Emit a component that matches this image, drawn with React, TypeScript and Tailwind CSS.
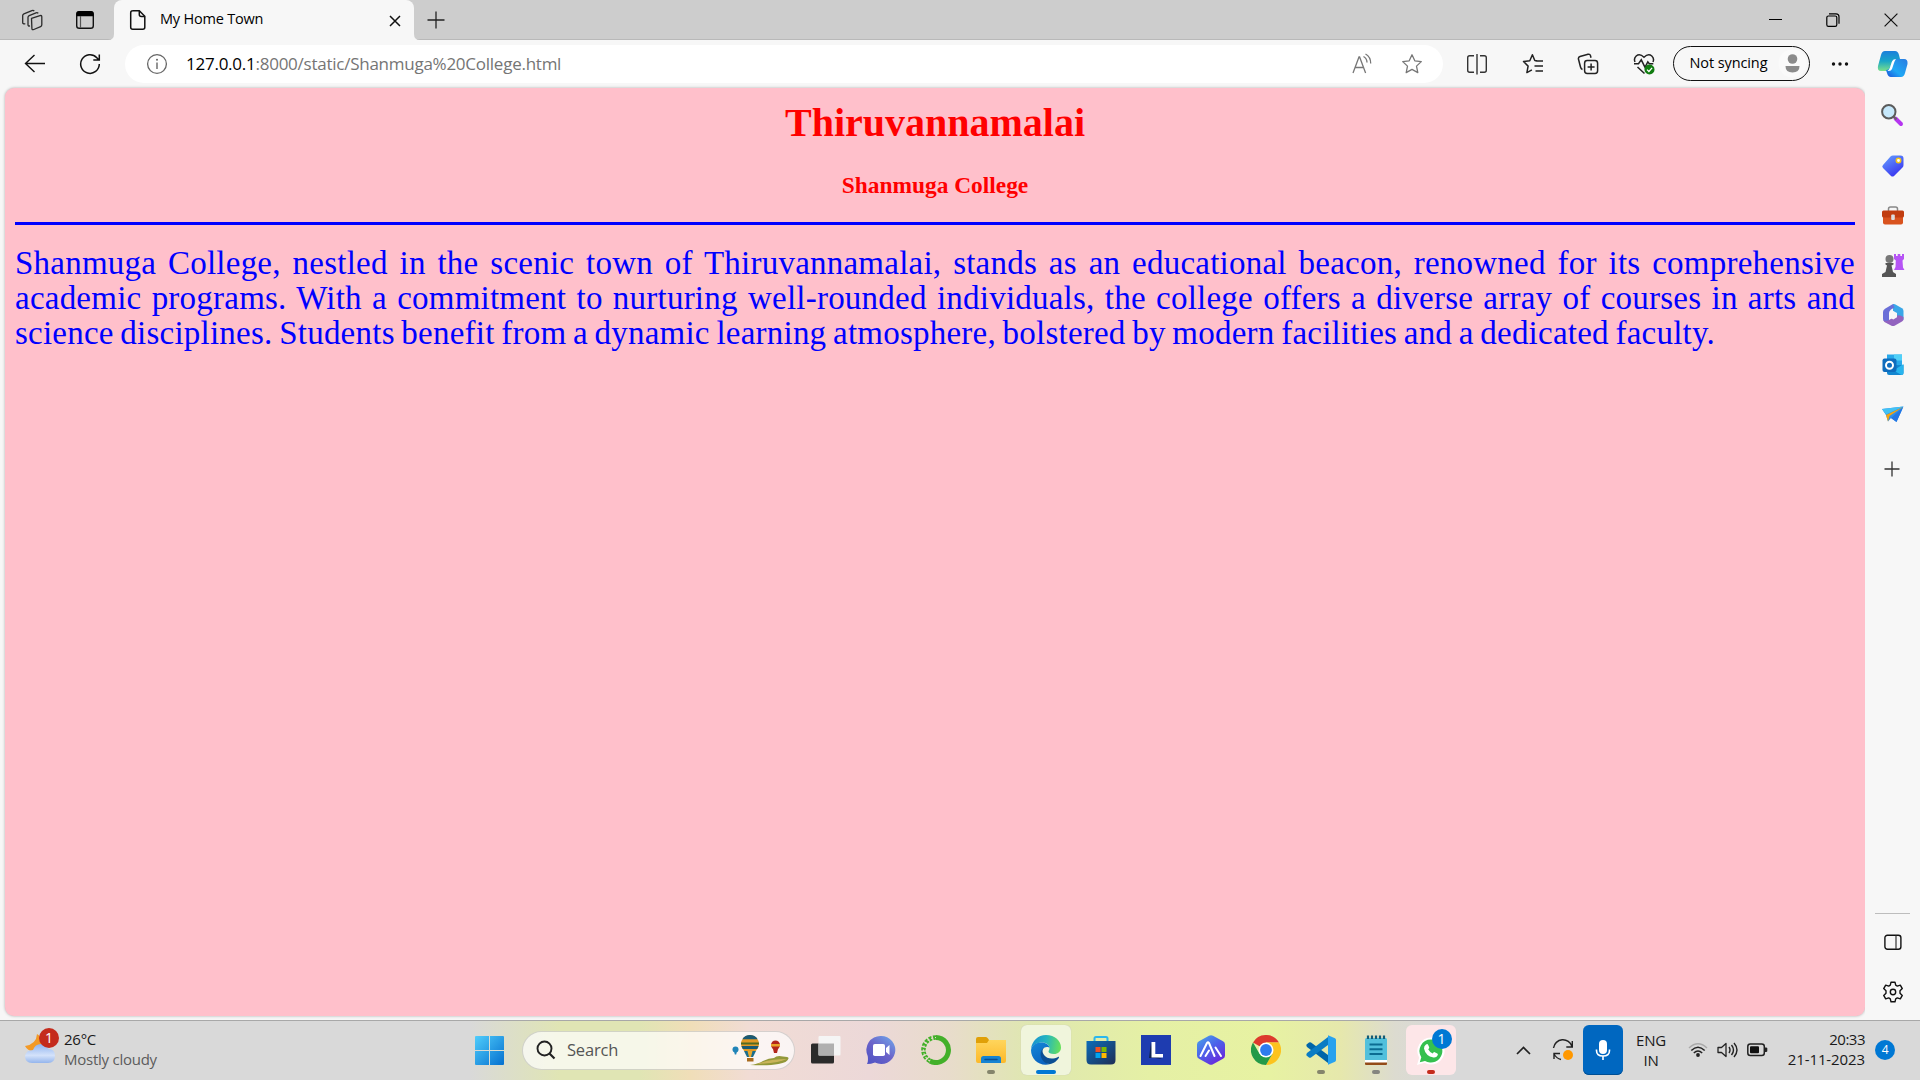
import React from "react";

type IconProps = { w: number; h: number; className?: string; children: React.ReactNode };

function Icon({ w, h, className = "", children }: IconProps) {
  return (
    <svg width={w} height={h} viewBox={`0 0 ${w} ${h}`} fill="none" className={`block shrink-0 ${className}`}>
      {children}
    </svg>
  );
}

function TitleBar() {
  return (
    <header className="flex h-10 items-center bg-[#cdcdcd] shadow-[inset_0_-1px_0_#b9b9b9]">
      <Icon w={22} h={22} className="ml-[21px]">
        <g stroke="#2b2b2b" strokeWidth="1.3" strokeLinejoin="round">
          <path d="M10.5 9.4 19 6.6q1.8-.5 1.8 1.2v8q0 1.3-1.2 1.8l-6.800 2.900q-1.900.7-1.900-1.100z" />
          <path d="M9 16.900q-2 .5-2-1.200V8.300q0-1.200 1.200-1.700L15 3.800q1.500-.6 2.200.6" />
          <path d="M4.300 14.600q-2.600.7-2.600-1.200V6.600q0-1.300 1.200-1.800l8-3.200q1.600-.6 2.300.6" />
        </g>
      </Icon>
      <Icon w={20} h={20} className="ml-8">
        <rect x="1.700" y="1.700" width="16.600" height="16.600" rx="2.600" stroke="#111" strokeWidth="1.400" />
        <path d="M1.500 6.200V4q0-3 3-3h11q3 0 3 3v2.200z" fill="#000" />
        <path d="M5.500 6v12" stroke="#555" strokeWidth="1.200" />
      </Icon>
      <div className="relative ml-[19px] flex h-10 w-[300px] items-center rounded-t-lg bg-[#f7f7f7]">
        <svg className="absolute bottom-0 -left-[6px]" width="6" height="6"><path d="M6 0v6H0q6 0 6-6" fill="#f7f7f7" /></svg>
        <svg className="absolute -right-[6px] bottom-0" width="6" height="6"><path d="M0 0v6h6Q0 6 0 0" fill="#f7f7f7" /></svg>
        <Icon w={18} h={22} className="ml-[15px]">
          <path d="M3.500 1.700h6.800l5.500 5.600v11q0 2-2 2H3.700q-2 0-2-2V3.700q0-2 2-2z" stroke="#111" strokeWidth="1.500" />
          <path d="M10.300 2v3.500q0 2 2 2h3.300" stroke="#111" strokeWidth="1.500" />
        </Icon>
        <span className="-mt-[2px] ml-[13px] w-[230px] whitespace-nowrap text-[14.500px] leading-5 tracking-[-0.200px]">My Home Town</span>
        <Icon w={12} h={12} className="-ml-px mt-px">
          <path d="m1 1 10 10M11 1 1 11" stroke="#111" strokeWidth="1.500" />
        </Icon>
      </div>
      <Icon w={18} h={18} className="ml-[13px]">
        <path d="M9 .5v17M.5 9h17" stroke="#222" strokeWidth="1.300" />
      </Icon>
      <div className="ml-auto flex items-center gap-[44px] pr-[22px]">
        <Icon w={13} h={14}><path d="M0 6.500h13" stroke="#000" /></Icon>
        <Icon w={14} h={14}>
          <rect x=".8" y="3" width="10" height="10.300" rx="1.600" stroke="#000" strokeWidth="1.200" />
          <path d="M3 .8h7q3 0 3 3v7" stroke="#000" strokeWidth="1.200" />
        </Icon>
        <Icon w={14} h={14}><path d="m.6.600 12.800 12.800M13.400.600.600 13.400" stroke="#111" strokeWidth="1.200" /></Icon>
      </div>
    </header>
  );
}

function Toolbar() {
  return (
    <div className="flex h-12 items-center bg-[#f7f7f7] pb-px">
      <Icon w={22} h={20} className="ml-6">
        <path d="M21 9.500H1.500M10.500 1l-9 8.500 9 8.500" stroke="#111" strokeWidth="1.400" />
      </Icon>
      <Icon w={22} h={22} className="ml-[33px]">
        <path d="M20.300 11a9.300 9.300 0 1 1-2.500-6.300L20 7M20.300 1.500V7h-6" stroke="#111" strokeWidth="1.500" />
      </Icon>
      <div className="ml-6 flex h-[38px] w-[1318px] items-center rounded-full bg-white">
        <Icon w={22} h={22} className="ml-[21px]">
          <circle cx="11" cy="11" r="9.400" stroke="#666" strokeWidth="1.300" />
          <path d="M11 9.500v6.500" stroke="#666" strokeWidth="1.400" /><circle cx="11" cy="6.700" r="1" fill="#666" />
        </Icon>
        <span className="ml-[18px] w-[1165px] whitespace-nowrap text-[17px] leading-6 tracking-[-0.250px] text-[#757575]">
          <span className="text-black">127.0.0.1</span>:8000/static/Shanmuga%20College.html
        </span>
        <Icon w={22} h={22}>
          <path d="m2 20 6-16h.6l6 16M4 14.500h8.500M12.500 3.500q3.500 2 3.500 6M14.500 1q5.200 2.800 5.200 9.500" stroke="#777" strokeWidth="1.300" />
        </Icon>
        <Icon w={22} h={22} className="ml-[28px]">
          <path d="m11 1.800 2.800 6 6.500.8-4.800 4.500 1.300 6.500L11 16.400l-5.800 3.200 1.300-6.500L1.700 8.600l6.500-.8z" stroke="#777" strokeWidth="1.300" strokeLinejoin="round" />
        </Icon>
      </div>
      <div className="ml-[23px] flex items-center gap-[33.500px]">
        <Icon w={22} h={22}>
          <path d="M8 2.800H3.700q-2 0-2 2v12.400q0 2 2 2H8M14 2.800h4.300q2 0 2 2v12.400q0 2-2 2H14M11 1v20.500" stroke="#333" strokeWidth="1.400" />
        </Icon>
        <Icon w={22} h={22}>
          <path d="M15 7.800 12.800 7.500 10.400 1.800 7.800 7.700 1.500 8.500l4.600 4.600-1.200 6.500 5-2.700M13.500 8h7.500M12.500 13h8.500M13.500 18h7.500" stroke="#222" strokeWidth="1.500" strokeLinejoin="round" />
        </Icon>
        <Icon w={22} h={22}>
          <rect x="7.600" y="7.600" width="13" height="12.800" rx="2.600" stroke="#222" strokeWidth="1.500" />
          <path d="M14.100 10.500v7M10.600 14h7M5.500 16.500q-1.500-.5-2-2.500L1.500 6.200q-.5-2 1.500-2.700l8-2.200q2-.5 2.500 1.500l.5 2" stroke="#222" strokeWidth="1.500" />
        </Icon>
        <Icon w={22} h={22}>
          <path d="M2 9Q.5 5.500 3.200 3q3.500-3 7.800 1.200Q15.300 0 18.800 3 21.500 5.500 20 9M1 10.800h4.500l2.800-4 3.700 7.500 2.800-5.500 1.500 2h4M4.500 14l7 6.500" stroke="#222" strokeWidth="1.500" />
          <circle cx="16.500" cy="16.500" r="5" fill="#107c10" />
          <path d="m14 16.600 1.900 1.900 3.200-3.600" stroke="#fff" strokeWidth="1.300" />
        </Icon>
      </div>
      <div className="ml-[18px] flex h-[35px] w-[137px] items-center rounded-full border-[1.500px] border-[#111]">
        <span className="-mt-px ml-4 w-[88px] whitespace-nowrap text-[14.500px] leading-5 tracking-[-0.100px]">Not syncing</span>
        <Icon w={29} h={29}>
          <circle cx="14.500" cy="14.500" r="14" fill="#fafafa" />
          <circle cx="14.500" cy="10" r="4.800" fill="#8b8b8b" />
          <path d="M7.500 17h14q0 6.500-7 6.500t-7-6.500" fill="#8b8b8b" />
        </Icon>
      </div>
      <Icon w={18} h={4} className="ml-[21px]">
        <circle cx="2.500" cy="2" r="1.700" fill="#111" /><circle cx="9" cy="2" r="1.700" fill="#111" /><circle cx="15.500" cy="2" r="1.700" fill="#111" />
      </Icon>
      <Icon w={32} h={28} className="ml-[28px]">
        <defs>
          <linearGradient id="cpA" x1="0" y1="0" x2="0" y2="1"><stop stopColor="#1b7fdc" /><stop offset=".5" stopColor="#18a5c8" /><stop offset="1" stopColor="#7be08a" /></linearGradient>
          <linearGradient id="cpB" x1="0" y1="1" x2="1" y2="0"><stop stopColor="#1a4fd8" /><stop offset=".4" stopColor="#1fa8f5" /><stop offset="1" stopColor="#2a7be0" /></linearGradient>
        </defs>
        <path d="M8 1h10q3 0 4 4l1 4h-4q-3 0-4 3l-2 6q-1 3-4 3H4q-4 0-3-5L4 5q1-4 4-4" fill="url(#cpA)" />
        <path d="M24 27H14q-3 0-4-4l-1-3q3 0 4-3l2-5q1-3 4-3h8q4 0 3.500 5L28 23q-1 4-4 4" fill="url(#cpB)" />
        <path d="M15 11.500q1-2.500 4-2.500-1.500 2-2 4l-2 6q-.8 2.500-4.500 2 1.500-1 2.300-3z" fill="#fff" />
      </Icon>
    </div>
  );
}

function SideBar() {
  return (
    <aside className="flex w-[55px] flex-col items-center bg-[#f7f7f7] pt-[15px]">
      <div className="flex flex-col items-center gap-[26px]">
        <Icon w={24} h={24} className="-ml-px">
          <path d="m15.500 15.500 5.500 5.500" stroke="#b535f0" strokeWidth="4" strokeLinecap="round" />
          <path d="m13.500 13.500 3 3" stroke="#666" strokeWidth="2" />
          <circle cx="8.800" cy="8.800" r="6.700" fill="#c6e8fb" stroke="#5b5b5b" strokeWidth="2" />
        </Icon>
        <Icon w={24} h={24} className="mt-px">
          <defs><linearGradient id="tag" x1="0" y1="0" x2=".6" y2="1"><stop stopColor="#66a3ff" /><stop offset="1" stopColor="#3a36f0" /></linearGradient></defs>
          <path d="M12 1.500h7.500q3 0 3 3V11q0 1.500-1 2.500L13 22q-1.500 1-3 0l-8-8q-1.500-1.500 0-3L9.500 2.500Q10.500 1.500 12 1.500" fill="url(#tag)" />
          <circle cx="17.500" cy="6.500" r="2.200" fill="#fff" stroke="#f5c518" strokeWidth="1.500" />
        </Icon>
        <Icon w={24} h={24}>
          <path d="M7.500 7V5q0-2 2-2h5q2 0 2 2v2" stroke="#888" strokeWidth="1.500" />
          <path d="M2 11h20v7.500q0 2-2 2H4q-2 0-2-2z" fill="#d9531e" />
          <path d="M1 8q0-1.500 1.500-1.500h19Q23 6.500 23 8v4q0 1.500-2 1.500H3Q1 13.500 1 12z" fill="#c13d10" />
          <rect x="10.200" y="10.500" width="3.600" height="5.500" rx="1" fill="#ddd" />
        </Icon>
        <Icon w={24} h={24} className="-mt-px">
          <path d="M13 1h2v2h1.700V1h2.600v2H21V1h2v5l-1.500 1.500.5 7 1.500 2.500H13l1.500-3 .3-6.500L13 6z" fill="#b654f5" />
          <circle cx="8.500" cy="6" r="4" fill="#777" /><path d="M4.500 10h8v1.500l-2 1 1.500 6.500 3 2v3H1v-3l3.500-2 1.500-6.500-1.500-1z" fill="#555" />
        </Icon>
        <Icon w={24} h={24}>
          <path d="M12 1q1-.3 2 .2l7 4q1.500 1 1.500 2.800v9L16 13l-4-5z" fill="#39a7e8" />
          <path d="m12 1-8 4.700Q2 7 2 9v7q0 1.500 1.500 2.500L8 21V10q0-2 2-3.500l3.500-2z" fill="#6a6fd8" />
          <path d="M2 17q3 2 6 0l8-4.500q3-1 6.500 1.500v2q0 1.500-1.500 2.500l-7 4q-2 1-4 0l-6.500-3.500z" fill="#9263bf" />
          <path d="m12.300 8 3.700 2v4.200l-3.700 2.200-3.700-2.200V10z" fill="#f7f7f7" />
        </Icon>
        <Icon w={24} h={24}>
          <rect x="6" y="1.500" width="15" height="12" fill="#28a8ea" /><path d="M13 1.500h8v6h-8z" fill="#50d0f8" />
          <path d="M6 12h16.500v8q0 2-2 2H8q-2 0-2-2z" fill="#1386d0" /><path d="m22.500 11-10 6.500 8 4.500q2 0 2-2z" fill="#28b5ee" />
          <rect x="1.500" y="5.500" width="14" height="13.500" rx="2" fill="#0f6cbd" /><circle cx="8.500" cy="12.200" r="3.500" stroke="#fff" strokeWidth="2" />
        </Icon>
        <Icon w={24} h={24}>
          <path d="M1 6 22.500 3.500 15.500 19l-5.500-4-3 3.500-2-6.500z" fill="#2e8fe8" /><path d="M1 6 22.500 3.500 5 11.500z" fill="#42c2f5" />
          <path d="M22 4 5 12l2 6.500 1.500-5.500z" fill="#f6a50f" /><path d="m22 4.500-12 10.500 5.500 4z" fill="#2376e5" />
        </Icon>
        <Icon w={24} h={24} className="mt-[4px] -ml-px"><path d="M12 4.500v15M4.500 12h15" stroke="#333" strokeWidth="1.300" /></Icon>
      </div>
      <div className="mt-auto h-px w-[35px] bg-[#bdbdbd]" />
      <Icon w={18} h={17} className="mt-5">
        <rect x=".9" y="1.200" width="16" height="14" rx="2.500" stroke="#111" strokeWidth="1.400" /><path d="M12 1.500v13.500" stroke="#333" strokeWidth="1.200" />
      </Icon>
      <Icon w={22} h={22} className="mt-[30px] mb-[17px]">
        <path d="M9 1.200h4l.7 3 1.600.9 3-1 2 3.500-2.300 2.200v2.400l2.300 2.200-2 3.500-3-1-1.600.9-.7 3H9l-.7-3-1.600-.9-3 1-2-3.500L4 12.200V9.800L1.700 7.600l2-3.500 3 1 1.600-.9z" stroke="#111" strokeWidth="1.400" strokeLinejoin="round" />
        <circle cx="11" cy="11" r="2.700" stroke="#111" strokeWidth="1.400" />
      </Icon>
    </aside>
  );
}

function Page() {
  return (
    <main className="ml-[5px] h-[928px] w-[1860px] rounded-[9px] bg-[#ffc0cb] px-2.5 pt-[12px] shadow-[0_0_3px_rgba(0,0,0,0.3)]">
      <h1 className="text-center font-['Liberation_Serif',serif] text-[40px] leading-[46px] font-bold text-[#ff0000]">Thiruvannamalai</h1>
      <h3 className="mt-[26px] text-center font-['Liberation_Serif',serif] text-[23.400px] leading-[26px] font-bold text-[#ff0000]">Shanmuga College</h3>
      <hr className="mt-[24px] h-[3px] border-0 bg-[#0000ff]" />
      <div className="mt-[21px] font-['Liberation_Serif',serif] text-[33px] leading-[35px] tracking-[0.230px] [word-spacing:-2px] whitespace-nowrap text-[#0000ff]">
        <p className="[text-align-last:justify]">Shanmuga College, nestled in the scenic town of Thiruvannamalai, stands as an educational beacon, renowned for its comprehensive</p>
        <p className="[text-align-last:justify]">academic programs. With a commitment to nurturing well-rounded individuals, the college offers a diverse array of courses in arts and</p>
        <p className="w-[1700px] [text-align-last:justify]">science disciplines. Students benefit from a dynamic learning atmosphere, bolstered by modern facilities and a dedicated faculty.</p>
      </div>
    </main>
  );
}

function Slot({ dot, active, children }: { dot?: string; active?: string; children: React.ReactNode }) {
  return (
    <div className="flex w-[55px] justify-center">
      <div className={`relative flex size-[50px] items-center justify-center rounded-md ${active ?? ""}`}>
        {children}
        {dot && <span className={`absolute bottom-[1px] h-1 rounded-full ${dot}`} />}
      </div>
    </div>
  );
}

function TaskIcons() {
  return (
    <div className="ml-[3px] flex">
      <Slot>
        <Icon w={30} h={30}><rect x="0" y="8.500" width="23" height="20" rx="1.500" fill="#2b2b2b" /><rect x="7.500" y="1" width="22" height="19.500" rx="1" fill="#f5f5f5" /><path d="M7.500 8.500H23v12H7.500z" fill="#b0b0b0" /></Icon>
      </Slot>
      <Slot>
        <Icon w={30} h={30}>
          <defs><linearGradient id="chat" x1=".1" y1="1" x2=".9" y2="0"><stop stopColor="#5053c4" /><stop offset=".5" stopColor="#6b63c9" /><stop offset="1" stopColor="#6fa5ea" /></linearGradient></defs>
          <path d="M15 1a14 14 0 1 1-6 26.500Q5 29 1 29q1.500-2.500.7-8A14 14 0 0 1 15 1" fill="url(#chat)" />
          <rect x="7" y="9" width="12" height="12" rx="1.800" fill="#fff" /><path d="m20 13 3.500-3v10L20 17z" fill="#fff" />
        </Icon>
      </Slot>
      <Slot>
        <Icon w={30} h={30}>
          <path d="M15 2.500a12.500 12.500 0 1 1-6 23.500" stroke="#43b02a" strokeWidth="5" />
          <path d="M9 26A12.500 12.500 0 0 1 15 2.500" stroke="#43b02a" strokeWidth="4.500" strokeDasharray="3 1.300" />
          <path d="M9 26A12.500 12.500 0 0 1 15 2.500" stroke="#e4dcca" strokeWidth="1.200" strokeDasharray="2 2" />
        </Icon>
      </Slot>
      <Slot dot="w-2 bg-[#85856c]">
        <Icon w={30} h={30}>
          <defs><linearGradient id="fold" x1="0" y1="0" x2="0" y2="1"><stop stopColor="#ffd55c" /><stop offset="1" stopColor="#fcb92a" /></linearGradient></defs>
          <path d="M0 4q0-2 2-2h8q1 0 2 1.500L13 5h15q2 0 2 1.500V12H0z" fill="#e0a008" /><path d="M0 8h11l2-3h17v21q0 2-2 2H2q-2 0-2-2z" fill="url(#fold)" />
          <path d="M5 28v-4.500Q5 21 7.500 21h15q2.500 0 2.500 2.500V28z" fill="#1683d2" /><path d="M9 24.500h12" stroke="#0a4f94" strokeWidth="1.500" strokeLinecap="round" />
        </Icon>
      </Slot>
      <Slot dot="w-5 bg-[#0078d4]" active="bg-[#f0f5dc] shadow-[0_0_1px_#bbb]">
        <Icon w={30} h={30}>
          <defs>
            <linearGradient id="edA" x1="0" y1=".3" x2="1" y2=".4"><stop stopColor="#178fd2" /><stop offset=".5" stopColor="#25b5c0" /><stop offset="1" stopColor="#66e05c" /></linearGradient>
            <linearGradient id="edB" x1="0" y1="0" x2=".5" y2="1"><stop stopColor="#1488d8" /><stop offset="1" stopColor="#0b63c0" /></linearGradient>
          </defs>
          <path d="M0 14C1 6 7 0 15 0c9 0 15 6 15 12.500 0 4-3 6.500-7 6.500-3.500 0-5.500-1.300-5.500-2.500 0-.8 1-1.500 1-3.500 0-3-3-5.500-7.500-5.500C6 7.500 2 10 0 14" fill="url(#edA)" />
          <path d="M0 15C1 10 5 7.500 10.500 7.500c4.500 0 8 2.500 8 5.500-1-1.500-6-1.500-7.500 2.500-2 6 2.500 13 8.500 13.500C9 32 0 25 0 15" fill="url(#edB)" />
          <path d="M13 12.500c-2 2-2 5 0 7.500 3 4 9 4.500 14 2 .8-.4 1.300.2.800 1-3 4.500-7 6-9.500 6C11 28.500 6 18 13 12.500" fill="#0c4f94" />
        </Icon>
      </Slot>
      <Slot>
        <Icon w={30} h={30}>
          <defs><linearGradient id="store" x1="0" y1="0" x2="1" y2="1"><stop stopColor="#0c6cb8" /><stop offset="1" stopColor="#1f2e55" /></linearGradient></defs>
          <path d="M8.500 7V3.500Q8.500 2 10 2h10q1.500 0 1.500 1.500V7" stroke="#2bb7ee" strokeWidth="2" /><path d="M.5 6h29v19q0 4.500-4.500 4.500H5Q.5 29.500.5 25z" fill="url(#store)" />
          <path d="M9.500 12h5v5h-5z" fill="#f25022" /><path d="M15.500 12h5v5h-5z" fill="#7fba00" /><path d="M9.500 18h5v5h-5z" fill="#00a4ef" /><path d="M15.500 18h5v5h-5z" fill="#ffb900" />
        </Icon>
      </Slot>
      <Slot>
        <div className="flex size-[30px] items-center justify-center bg-[#1e3cb0]">
          <Icon w={16} h={20}><path d="m3 2-2 16h6l7 1-9-5z" fill="#0e2352" /><path d="M3.500 2h3.800v12H15v3.500H3.500z" fill="#fff" /></Icon>
        </div>
      </Slot>
      <Slot>
        <Icon w={30} h={30}>
          <defs><linearGradient id="alp" x1="0" y1="0" x2=".7" y2="1"><stop stopColor="#4aa8e8" /><stop offset=".5" stopColor="#4b63ea" /><stop offset="1" stopColor="#6a28dc" /></linearGradient></defs>
          <path d="M13 .7q2-1 4 0l10 5.600q2 1 2 3.200v11q0 2.200-2 3.200l-10 5.600q-2 1-4 0L3 23.700q-2-1-2-3.200v-11q0-2.200 2-3.200z" fill="url(#alp)" />
          <path d="m4.500 21 6.500-13q1-1.500 2 0l5.500 13M9.500 21l3.500-5.500M19.500 12.500l5.500 8.500" stroke="#fff" strokeWidth="2" strokeLinecap="round" strokeLinejoin="round" />
        </Icon>
      </Slot>
      <Slot>
        <Icon w={30} h={30}>
          <path d="M15 15 2 7.500A15 15 0 0 1 28 7.500H15z" fill="#dd3a2d" /><path d="M15 7.500h13A15 15 0 0 1 15 30l6.500-11.300z" fill="#fcc31e" /><path d="M8.500 18.700 2 7.500A15 15 0 0 0 15 30l6.500-11.300z" fill="#249a48" />
          <circle cx="15" cy="15" r="7.500" fill="#fff" /><circle cx="15" cy="15" r="5.900" fill="#2f7bee" />
        </Icon>
      </Slot>
      <Slot dot="w-2 bg-[#85856c]">
        <Icon w={30} h={30}>
          <path d="M.5 9.500 3 7.500q1-.7 2 0L22 20v8L1 12q-1-1.300-.5-2.500" fill="#0065a9" /><path d="M.5 20.500 3 22.500q1 .7 2 0L22 10V2L1 18q-1 1.300-.5 2.500" fill="#0a7cc4" />
          <path d="m22 .300 7 3q1 .5 1 1.700v20q0 1.200-1 1.700l-7 3z" fill="#27a2ef" />
        </Icon>
      </Slot>
      <Slot dot="w-2 bg-[#858580]">
        <Icon w={24} h={30}>
          <rect x="1" y="3" width="22" height="23.500" rx="1.500" fill="#52c0dc" /><path d="M1 25h22v4q0 1-1 1H2q-1 0-1-1z" fill="#934b18" /><path d="M1 25h22v2.500H1z" fill="#fff" />
          <path d="M5.500 9.500h13M5.500 14.300h13M5.500 19h13" stroke="#0b6c92" strokeWidth="1.900" /><path d="M4 .5v3.500M8 .5v3.500M12 .5v3.500M16 .5v3.500M20 .5v3.500" stroke="#155c76" strokeWidth="2.200" />
        </Icon>
      </Slot>
      <Slot dot="w-2 bg-[#c42b1c]" active="bg-[#fde6e8]">
        <Icon w={30} h={30} className="mt-px">
          <path d="M15 1.500a13.500 13.500 0 1 1-6.500 25.300L1 29l2.200-7.300A13.500 13.500 0 0 1 15 1.500" fill="#fff" /><path d="M15 3.500a11.500 11.500 0 1 1-6 21.400L3.800 26.200l1.500-5A11.500 11.500 0 0 1 15 3.500" fill="#35c04f" />
          <path d="M10 8.500q1.500-1 2.200.5l1 2.300q.3.800-1 2 1.500 3 4.500 4.200 1.300-1.700 2-1.300l2.600 1.200q1 .5.400 1.900-1.200 2.500-4.200 2.200Q9.500 20 8 12.500q-.1-2.500 2-4" fill="#fff" />
        </Icon>
        <span className="absolute top-1 left-[26px] flex size-5 items-center justify-center rounded-full bg-[#0078d4] text-[14px] leading-none text-white">1</span>
      </Slot>
    </div>
  );
}

function SearchBox() {
  return (
    <div className="ml-[18px] flex h-[39px] w-[273px] items-center rounded-full border border-black/15 bg-white/70">
      <Icon w={20} h={20} className="ml-[13px]"><circle cx="8.500" cy="8.500" r="7" stroke="#222" strokeWidth="1.900" /><path d="m13.500 13.500 5 5" stroke="#222" strokeWidth="2.200" /></Icon>
      <span className="-mt-px ml-[11px] w-[165px] text-[16.500px] leading-5 tracking-[-0.200px] text-[#555]">Search</span>
      <Icon w={58} h={32}>
        <path d="M18 31q8-1 13-4 6-3 11-3 3-3 9-1.500 6 0 5.500 2-1 4-10 5.500-10 2-28.500 1" fill="#93983a" /><path d="M25 30q12-5 30-5-8 4-30 5" fill="#c9b45a" />
        <circle cx="3.500" cy="15.500" r="3" fill="#2084b8" /><path d="M2 17h3l-.8 3.500H2.800z" fill="#2084b8" />
        <circle cx="18" cy="10" r="9" fill="#e49a25" /><path d="M10.300 5.200Q13 1 18 1t7.700 4.200zM9.500 12h17l-1.200 3H10.700z" fill="#1b5a73" /><path d="M9 8.500h18v2H9z" fill="#556b22" />
        <path d="M12 17h12l-3 6h-6z" fill="#1b6d8c" /><path d="M15.500 17h5L19 23h-2z" fill="#e7a92f" /><rect x="15" y="24" width="6.500" height="3.500" fill="#a86a1c" />
        <circle cx="43.500" cy="11" r="4.500" fill="#b3251c" /><path d="M39 10h9v2.500h-9z" fill="#e9a22a" /><path d="M41 15h5l-1 4h-3z" fill="#b3251c" />
      </Icon>
    </div>
  );
}

function Tray() {
  return (
    <div className="ml-auto flex items-center text-[15px] leading-5 tracking-[-0.200px] text-[#1a1a1a]">
      <Icon w={15} h={9} className="mr-[21px]"><path d="m1 8 6.500-6.500L14 8" stroke="#222" strokeWidth="1.700" /></Icon>
      <Icon w={22} h={22} className="mr-[9px]">
        <path d="M1.500 9a9.500 9.500 0 0 1 18.500-1.500M20.300 2v6h-6M2 20v-5.500h6M2 15q2.500 4.500 7 5.500" stroke="#222" strokeWidth="1.400" /><circle cx="16" cy="16" r="5" fill="#ff9800" />
      </Icon>
      <div className="flex h-[50px] w-10 items-center justify-center rounded-md bg-[#0067c0] shadow-[inset_0_-1px_0_#004f94]">
        <Icon w={16} h={22}><rect x="4" y="1" width="8" height="14" rx="4" fill="#fff" /><path d="M1.500 10.500v1q0 5.500 6.500 5.500t6.500-5.500v-1M8 17v4" stroke="#fff" strokeWidth="1.600" /></Icon>
      </div>
      <div className="-mt-px ml-[12px] w-[32px] text-center"><div>ENG</div><div>IN</div></div>
      <Icon w={20} h={16} className="ml-[21px]">
        <path d="M1 6q9-8.500 18 0" stroke="#aaa" strokeWidth="1.500" /><path d="M3.300 8.500q6.700-6.500 13.400 0M5.800 11q4.200-4 8.400 0" stroke="#222" strokeWidth="1.500" /><circle cx="10" cy="13" r="1.900" fill="#222" />
      </Icon>
      <Icon w={22} h={18} className="ml-[9px]">
        <path d="M1 6.500h3.500L9 2.500v13L4.500 11.500H1z" stroke="#222" strokeWidth="1.300" strokeLinejoin="round" /><path d="M12 6q2 3 0 6M14.500 4q4 5 0 10M17 2q6 7 0 14" stroke="#222" strokeWidth="1.400" />
      </Icon>
      <Icon w={21} h={14} className="ml-[8px]">
        <rect x=".8" y="1" width="16.500" height="11.500" rx="2.500" stroke="#222" strokeWidth="1.500" /><rect x="3" y="3.200" width="9" height="7" rx="1" fill="#111" /><path d="M18 4.500h1q1.300 0 1.300 1v2.500q0 1-1.300 1h-1z" fill="#222" />
      </Icon>
      <div className="-mt-[2px] ml-[19px] w-[78px] whitespace-nowrap text-right"><div className="tracking-[-0.500px]">20:33</div><div className="tracking-[-0.100px]">21-11-2023</div></div>
      <span className="mr-[25px] ml-[10px] flex size-5 items-center justify-center rounded-full bg-[#0078d4] text-[12px] leading-none text-white">4</span>
    </div>
  );
}

function Taskbar() {
  return (
    <footer className="flex h-[60px] items-center border-t border-[#a8a8a8] bg-[linear-gradient(90deg,#d9d9d9_470px,#e0e5b4_560px,#e0e5b4_640px,#f0deb8_690px,#f1dcd5_750px,#ecd8d8_870px,#e8dccb_950px,#dfe7b0_1030px,#e5f0a5_1150px,#e7f2a2_1270px,#e6e8ac_1340px,#dcdbd0_1395px,#d9d9d9_1440px)] pb-px">
      <div className="relative ml-[25px] h-[34px] w-[36px]">
        <Icon w={32} h={32}>
          <defs><linearGradient id="cloud" x1="0" y1="0" x2="0" y2="1"><stop stopColor="#8fb4f0" /><stop offset=".6" stopColor="#d4e2fa" /><stop offset="1" stopColor="#94b5ec" /></linearGradient></defs>
          <path d="M12 1q-.5 10-12 12 3 6 10 5 8-2 8-8-.5-6-6-9" fill="#f39a26" />
          <path d="M7 30q-7 0-7-7 1-6 8-6 2-6 8-6t7.500 5Q30 16 30 23q0 7-7 7z" fill="url(#cloud)" />
        </Icon>
        <span className="absolute -top-[5px] left-[14px] flex size-5 items-center justify-center rounded-full bg-[#c42b1c] text-[14px] leading-none text-white">1</span>
      </div>
      <div className="-mt-[2px] ml-[3px] w-[411px] whitespace-nowrap text-[15px] leading-5 tracking-[-0.250px]">
        <div className="text-[#1a1a1a]">26°C</div>
        <div className="text-[#5c5c5c]">Mostly cloudy</div>
      </div>
      <Icon w={29} h={29}>
        <defs><linearGradient id="win" x1="0" y1="0" x2="1" y2="1"><stop stopColor="#50cdfb" /><stop offset="1" stopColor="#0570cf" /></linearGradient></defs>
        <path d="M0 1q0-1 1-1h13v14H0zM15 0h13q1 0 1 1v13H15zM0 15h14v14H1q-1 0-1-1zM15 15h14v13q0 1-1 1H15z" fill="url(#win)" />
      </Icon>
      <SearchBox />
      <TaskIcons />
      <Tray />
    </footer>
  );
}

export default function App() {
  return (
    <div className="flex h-[1080px] w-[1920px] flex-col overflow-hidden bg-[#f7f7f7] font-['Open_Sans',sans-serif] text-black">
      <TitleBar />
      <Toolbar />
      <div className="flex flex-1"><div><Page /></div><SideBar /></div>
      <Taskbar />
    </div>
  );
}
